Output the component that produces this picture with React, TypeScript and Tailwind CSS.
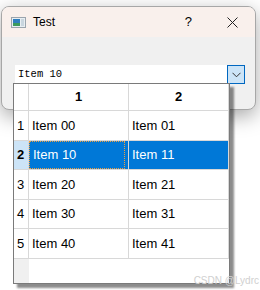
import React from 'react';

const rows = [
  ['Item 00', 'Item 01'],
  ['Item 10', 'Item 11'],
  ['Item 20', 'Item 21'],
  ['Item 30', 'Item 31'],
  ['Item 40', 'Item 41'],
];

const ChevronDown = () => (
  <svg width="9" height="6" viewBox="0 0 9 6" fill="none">
    <path d="M0.5 0.8 L4.5 4.8 L8.5 0.8" stroke="#333" strokeWidth="1" />
  </svg>
);

const AppIcon = () => (
  <svg width="15" height="11" viewBox="0 0 15 11">
    <rect x="0.5" y="0.5" width="14" height="10" fill="#e8eef2" stroke="#9aa4ad" />
    <rect x="2" y="2" width="7" height="7" fill="#2f7fbf" />
    <rect x="2" y="6" width="7" height="3" fill="#3c9a5c" />
    <rect x="10" y="2" width="3" height="7" fill="#c9d6df" />
  </svg>
);

export default function App() {
  return (
    <div className="relative w-[260px] h-[290px] overflow-hidden bg-white" style={{ fontFamily: '"Liberation Sans", Arial, sans-serif' }}>
      <div className="ml-[1px] mt-[6px] w-[255px] h-[104px] rounded-lg border border-[#a7a7a7] overflow-hidden bg-[#f0f0f0] shadow-[0_6px_20px_rgba(0,0,0,0.35)]">
        <div className="h-[30px] bg-[#f9f0ec] flex items-center">
          <div className="ml-[9px] mr-[7px] flex"><AppIcon /></div>
          <span className="text-[12px] text-black">Test</span>
          <span className="ml-auto mr-[35px] text-[13px] text-black">?</span>
          <svg width="11" height="11" viewBox="0 0 11 11" className="mr-[17px]">
            <path d="M0.5 0.5 L10.5 10.5 M10.5 0.5 L0.5 10.5" stroke="#222" strokeWidth="1" />
          </svg>
        </div>
        <div className="mt-[28px] ml-[13px] flex h-[19px]">
          <div className="w-[212px] bg-white flex items-center pl-[3px] text-[10.5px] text-black" style={{ fontFamily: '"Liberation Mono", monospace' }}>
            Item 10
          </div>
          <div className="w-[18px] border border-[#0067c0] bg-[#cce4f7] flex items-center justify-center">
            <ChevronDown />
          </div>
        </div>
      </div>

      <div className="absolute left-[13px] top-[83px] w-[217px] h-[201px] bg-white border border-[#7a7a7a] shadow-[4px_4px_2px_rgba(0,0,0,0.45)] flex flex-col text-[13px] text-black">
        <div className="flex h-[27px] border-b border-[#d8d8d8]">
          <div className="w-[15px] border-r border-[#d8d8d8]" />
          <div className="w-[100px] border-r border-[#d8d8d8] flex items-center justify-center font-bold">1</div>
          <div className="w-[100px] border-r border-[#d8d8d8] flex items-center justify-center font-bold">2</div>
        </div>
        {rows.map((r, i) => {
          const sel = i === 1;
          return (
            <div key={i} className="flex h-[29.6px] border-b border-[#d8d8d8]">
              <div className={`w-[15px] border-r border-[#d8d8d8] flex items-center pl-[3px] ${sel ? 'bg-[#cce4f7] font-bold' : ''}`}>{i + 1}</div>
              <div className={`w-[100px] border-r border-[#d8d8d8] flex items-center pl-[3px] ${sel ? 'bg-[#0078d7] text-white' : ''}`}>
                {sel ? (
                  <div className="w-full h-full flex items-center border border-dotted border-[#f0a040] -ml-[3px] pl-[3px]">{r[0]}</div>
                ) : r[0]}
              </div>
              <div className={`w-[100px] border-r border-[#d8d8d8] flex items-center pl-[3px] ${sel ? 'bg-[#0078d7] text-white' : ''}`}>{r[1]}</div>
            </div>
          );
        })}
        <div className="flex flex-1">
          <div className="w-[15px] bg-[#f0f0f0]" />
        </div>
      </div>

      <div className="absolute right-[1px] bottom-[2px] text-[10px] text-[#d0d0d0]">CSDN @Lydrc</div>
    </div>
  );
}
